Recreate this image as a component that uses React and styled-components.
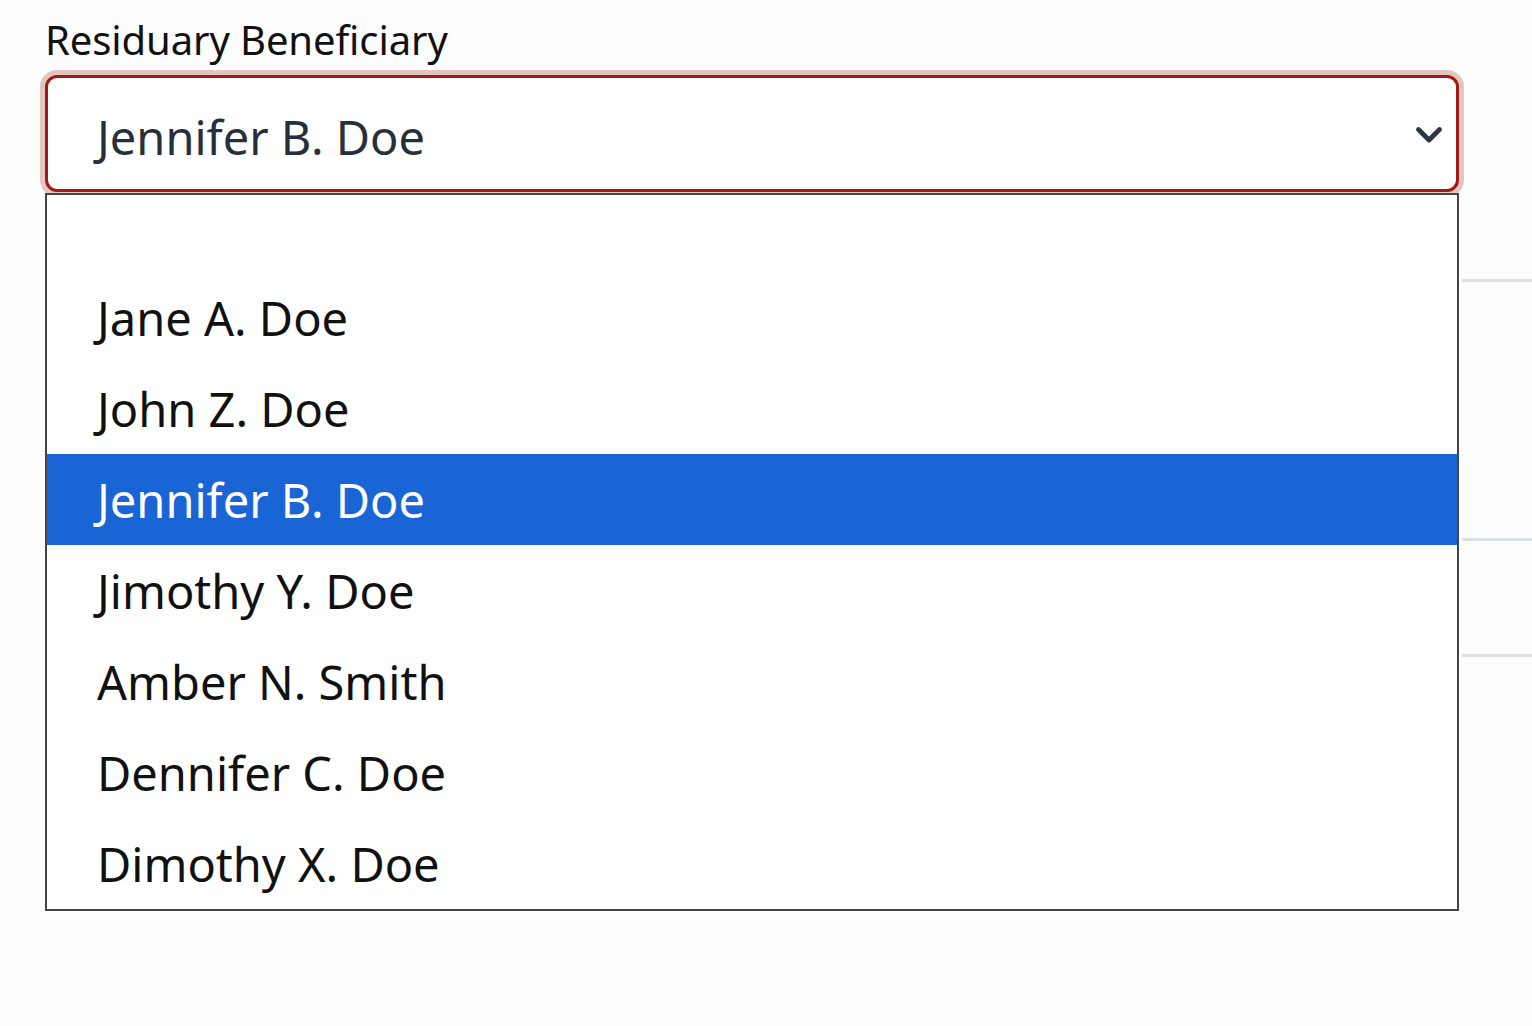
import React from 'react';
import styled, { createGlobalStyle } from 'styled-components';

const OPTIONS = [
  '',
  'Jane A. Doe',
  'John Z. Doe',
  'Jennifer B. Doe',
  'Jimothy Y. Doe',
  'Amber N. Smith',
  'Dennifer C. Doe',
  'Dimothy X. Doe',
];

const SELECTED = 'Jennifer B. Doe';

const GlobalStyle = createGlobalStyle`
  html, body {
    margin: 0;
    background: #fdfdfd;
  }
  body {
    font-family: 'Noto Sans', 'Open Sans', sans-serif;
  }
`;

const Page = styled.div`
  position: relative;
  width: 1532px;
  height: 1026px;
  overflow: hidden;
  padding: 13px 73px 0 45px;
  box-sizing: border-box;
`;

const Field = styled.div`
  position: relative;
  z-index: 1;
`;

const Label = styled.div`
  font-size: 40px;
  line-height: 54px;
  color: #111;
  letter-spacing: -0.1px;
`;

const SelectBox = styled.div`
  position: relative;
  margin-top: 8px;
  height: 117px;
  box-sizing: border-box;
  border: 3px solid #a3191b;
  border-radius: 12px;
  box-shadow: 0 0 0 5px rgba(196, 130, 110, 0.45);
  background: #fff;
  display: flex;
  align-items: center;
  padding: 6px 60px 0 49px;
  font-size: 47px;
  color: #27303a;
`;

const Chevron = styled.svg`
  position: absolute;
  right: 9px;
  top: 50%;
  width: 36px;
  height: 36px;
  margin-top: -18px;
`;

const Menu = styled.ul`
  position: absolute;
  top: 100%;
  left: 0;
  width: 1414px;
  margin: 1px 0 0;
  padding: 0;
  list-style: none;
  box-sizing: border-box;
  border: 2px solid #444;
  background: #fff;
`;

const Option = styled.li`
  height: ${p => (p.$empty ? 77 : 91)}px;
  display: flex;
  align-items: center;
  padding-left: 50px;
  font-size: 47px;
  color: ${p => (p.$active ? '#fff' : '#111')};
  background: ${p => (p.$active ? '#1a65d6' : 'transparent')};
`;

const Backdrop = styled.div`
  position: absolute;
  left: 1462px;
  right: 0;
  top: 0;
`;

const Divider = styled.div`
  height: 3px;
  background: #dcdfe3;
  margin-top: ${p => p.$gap}px;
`;

export default function App() {
  return (
    <Page>
      <GlobalStyle />
      <Backdrop>
        <Divider $gap={279} />
        <Divider $gap={256} />
        <Divider $gap={113} />
      </Backdrop>
      <Field>
        <Label>Residuary Beneficiary</Label>
        <SelectBox>
          {SELECTED}
          <Chevron viewBox="0 0 24 24" fill="none" stroke="#2b3644" strokeWidth="3.2" strokeLinecap="round" strokeLinejoin="round">
            <path d="M5 9l7 7 7-7" />
          </Chevron>
        </SelectBox>
        <Menu>
          {OPTIONS.map((name, i) => (
            <Option key={i} $empty={!name} $active={name === SELECTED}>
              {name}
            </Option>
          ))}
        </Menu>
      </Field>
    </Page>
  );
}
